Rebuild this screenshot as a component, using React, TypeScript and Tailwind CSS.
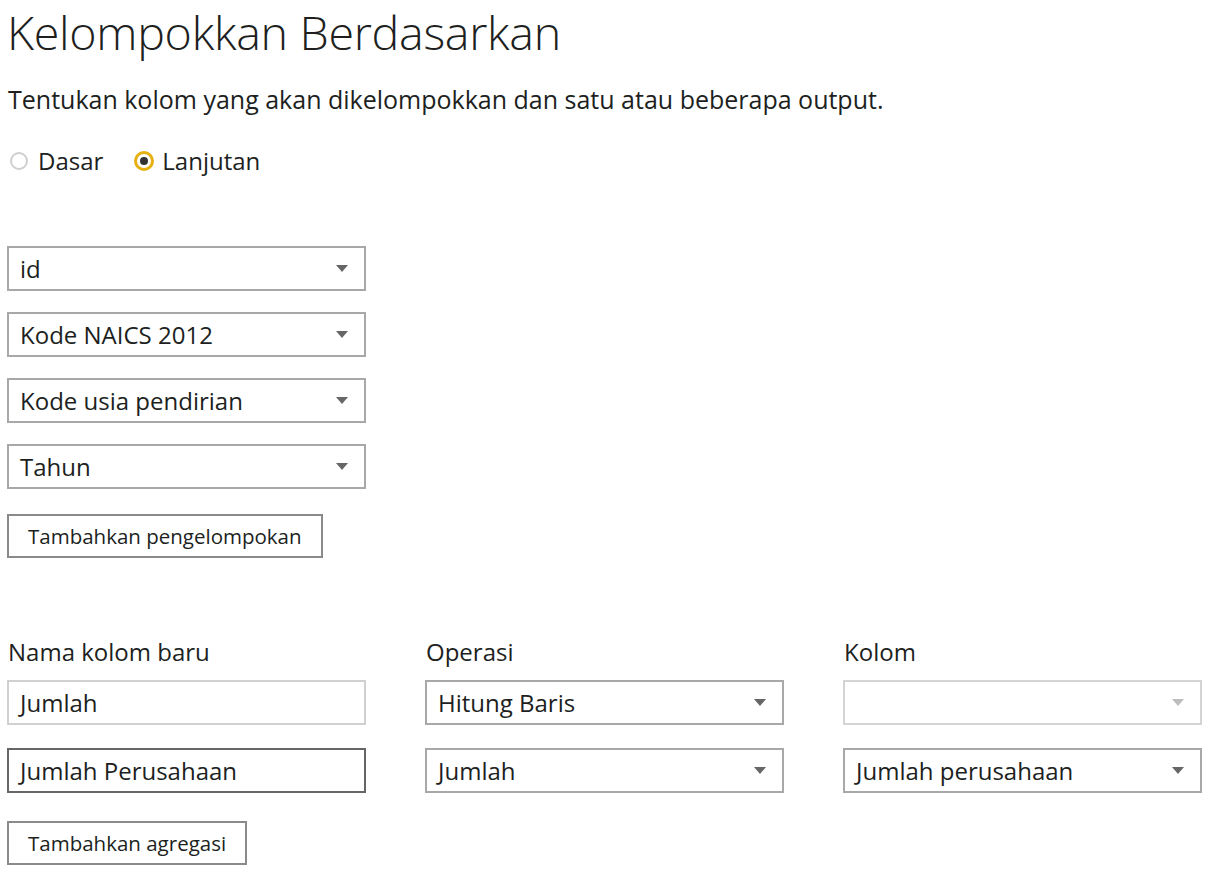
import { ReactNode } from 'react';

const font = { fontFamily: '"Open Sans", "Noto Sans", sans-serif' };

function Arrow({ faded }: { faded?: boolean }) {
  return (
    <svg width="12" height="7" viewBox="0 0 12 7" className="shrink-0">
      <path d="M0 0 L12 0 L6 7 Z" fill={faded ? '#bdbdbd' : '#666666'} />
    </svg>
  );
}

function Select({ value, disabled }: { value?: string; disabled?: boolean }) {
  return (
    <div
      className={`flex items-center justify-between h-[45px] w-[359px] pl-[11px] pr-[16px] border-2 bg-white ${
        disabled ? 'border-[#d4d4d4]' : 'border-[#a8a8a8]'
      }`}
    >
      <span className="text-[24px] leading-none text-[#201f1e]">{value}</span>
      <Arrow faded={disabled} />
    </div>
  );
}

function TextBox({ value, focused }: { value: string; focused?: boolean }) {
  return (
    <div
      className={`flex items-center h-[45px] w-[359px] pl-[11px] border-2 bg-white ${
        focused ? 'border-[#666666]' : 'border-[#d0d0d0]'
      }`}
    >
      <span className="text-[24px] leading-none text-[#201f1e]">{value}</span>
    </div>
  );
}

function Button({ children }: { children: ReactNode }) {
  return (
    <button className="h-[44px] px-[19px] border-2 border-[#8a8a8a] bg-white text-[20.5px] leading-none text-[#201f1e]">
      {children}
    </button>
  );
}

export default function App() {
  return (
    <div className="min-h-screen bg-white text-[#201f1e] pl-[7px]" style={font}>
      <h1 className="text-[46.6px] font-light leading-[64px] tracking-[-0.3px]">Kelompokkan Berdasarkan</h1>

      <p className="mt-[20px] pl-[1px] text-[25px] leading-[30px]">
        Tentukan kolom yang akan dikelompokkan dan satu atau beberapa output.
      </p>

      <div className="mt-[31px] flex items-center h-[32px] pl-[3px]">
        <span className="w-[18px] h-[18px] rounded-full border-2 border-[#cfcfcf]" />
        <span className="ml-[10px] text-[24px]">Dasar</span>
        <span className="ml-[31px] w-[20px] h-[20px] rounded-full border-[3px] border-[#e6b110] flex items-center justify-center">
          <span className="w-[8px] h-[8px] rounded-full bg-[#333333]" />
        </span>
        <span className="ml-[8px] text-[24px]">Lanjutan</span>
      </div>

      <div className="mt-[69px] flex flex-col gap-[21px]">
        <Select value="id" />
        <Select value="Kode NAICS 2012" />
        <Select value="Kode usia pendirian" />
        <Select value="Tahun" />
        <div className="mt-[4px]">
          <Button>Tambahkan pengelompokan</Button>
        </div>
      </div>

      <div className="mt-[79px] grid grid-cols-[359px_359px_359px] gap-x-[59px]">
        <div className="text-[24px] leading-[30px] pl-[1px]">Nama kolom baru</div>
        <div className="text-[24px] leading-[30px] pl-[1px]">Operasi</div>
        <div className="text-[24px] leading-[30px] pl-[1px]">Kolom</div>
      </div>

      <div className="mt-[13px] grid grid-cols-[359px_359px_359px] gap-x-[59px] gap-y-[23px]">
        <TextBox value="Jumlah" />
        <Select value="Hitung Baris" />
        <Select disabled />
        <TextBox value="Jumlah Perusahaan" focused />
        <Select value="Jumlah" />
        <Select value="Jumlah perusahaan" />
      </div>

      <div className="mt-[28px]">
        <Button>Tambahkan agregasi</Button>
      </div>
    </div>
  );
}
